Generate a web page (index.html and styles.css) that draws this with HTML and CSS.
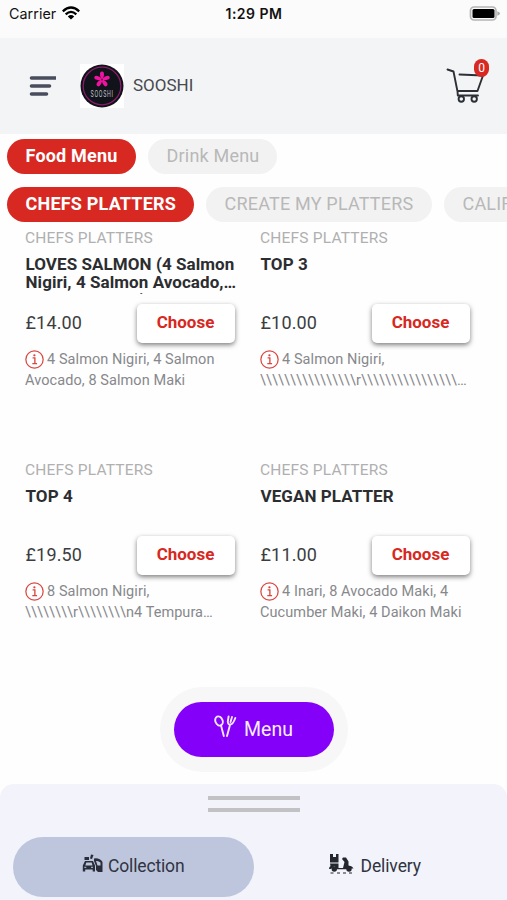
FILE: index.html
```html
<!DOCTYPE html>
<html lang="en">
<head>
<meta charset="utf-8">
<title>SOOSHI</title>
<link rel="stylesheet" href="styles.css">
</head>
<body>
<svg class="defs" width="0" height="0" aria-hidden="true">
  <symbol id="info" viewBox="0 0 20 20">
    <circle cx="10" cy="10" r="9.100" fill="none" stroke="#d9453f" stroke-width="1.300"/>
    <path d="M8 8.3h2.4v5.8M7.7 14.3h5" fill="none" stroke="#d9453f" stroke-width="1.400"/>
    <circle cx="9.9" cy="5.6" r="1.200" fill="#d9453f"/>
  </symbol>
</svg>
<div class="status">
  <div class="carrier"><span>Carrier</span>
    <svg width="18" height="14" viewBox="0 0 18 14"><g fill="none" stroke="#000" stroke-width="2.300"><path d="M.8 5.3Q9-2.2 17.200 5.300"/><path d="M3.700 8.300Q9 3.400 14.300 8.300"/></g><path d="M5.800 10.400Q9 7.800 12.200 10.400L9 13.600Z"/></svg>
  </div>
  <div class="time">1:29 PM</div>
  <svg class="battery" width="32" height="16" viewBox="0 0 32 16"><rect x="1.500" y="1" width="25.500" height="13" rx="3.500" fill="#fafafa" stroke="#b5b5b5" stroke-width="1.700"/><rect x="3.500" y="3" width="22" height="9" rx="1.500"/><path d="M28.300 5.300Q31 6 31 7.500T28.300 9.700Z" fill="#aaa"/></svg>
</div>
<header class="header">
  <svg class="burger" width="28" height="20" viewBox="0 0 28 20"><path d="M3.500 2h24M3.500 10h18M3.500 18h15" stroke="#484c5c" stroke-width="3.600" stroke-linecap="round"/></svg>
  <div class="logo">
    <svg width="44" height="44" viewBox="0 0 44 44">
      <circle cx="22" cy="22" r="21.500" fill="#11131a"/>
      <circle cx="22" cy="22" r="18.800" fill="none" stroke="#8c1c6a" stroke-width="1.200"/>
      <g fill="#f012a0" transform="translate(22 15.500)">
        <path id="petal" d="M-.8 0L-1.900-4Q-2.500-8 0-8Q2.500-8 1.900-4L.8 0Z"/>
        <use href="#petal" transform="rotate(72)"/><use href="#petal" transform="rotate(144)"/><use href="#petal" transform="rotate(216)"/><use href="#petal" transform="rotate(288)"/>
      </g>
      <circle cx="22" cy="15.500" r="1" fill="#59133f"/>
      <text class="logo-text" transform="translate(10.500 33) scale(.56 1)">SOOSHI</text>
    </svg>
  </div>
  <div class="brand">SOOSHI</div>
  <div class="cart">
    <svg width="40" height="38" viewBox="0 0 40 38" fill="none" stroke="#2c3036" stroke-width="1.900" stroke-linecap="round" stroke-linejoin="round"><path d="M1.500 2.500L7.500 4.500L11.500 24.500M13.500 7.500L37 8.500L31.500 24H11.500L11.800 28.500H32"/><circle cx="15.300" cy="32" r="2.700"/><circle cx="28.200" cy="32" r="2.700"/></svg>
    <span class="badge">0</span>
  </div>
</header>
<nav class="pills">
  <div class="pill on food">Food Menu</div>
  <div class="pill drink">Drink Menu</div>
</nav>
<nav class="pills second">
  <div class="pill on chefs">CHEFS PLATTERS</div>
  <div class="pill create">CREATE MY PLATTERS</div>
  <div class="pill cali">CALIFORNIA</div>
</nav>
<main class="grid">
  <article class="item">
    <div class="cat">CHEFS PLATTERS</div>
    <h2 class="title">LOVES SALMON (4 Salmon Nigiri, 4 Salmon Avocado,…<br>8 Salmon Maki)</h2>
    <div class="buy"><span class="price">£14.00</span><div class="choose">Choose</div></div>
    <p class="desc"><svg class="info"><use href="#info"/></svg>4 Salmon Nigiri, 4 Salmon Avocado, 8 Salmon Maki</p>
  </article>
  <article class="item">
    <div class="cat">CHEFS PLATTERS</div>
    <h2 class="title">TOP 3</h2>
    <div class="buy"><span class="price">£10.00</span><div class="choose">Choose</div></div>
    <p class="desc"><svg class="info"><use href="#info"/></svg>4 Salmon Nigiri,<br><span class="slashes">\\\\\\\\\\\\\\\\r\\\\\\\\\\\\\\\\…</span></p>
  </article>
  <article class="item">
    <div class="cat">CHEFS PLATTERS</div>
    <h2 class="title">TOP 4</h2>
    <div class="buy"><span class="price">£19.50</span><div class="choose">Choose</div></div>
    <p class="desc"><svg class="info"><use href="#info"/></svg>8 Salmon Nigiri,<br><span class="slashes">\\\\\\\\r\\\\\\\\n4 Tempura…</span></p>
  </article>
  <article class="item">
    <div class="cat">CHEFS PLATTERS</div>
    <h2 class="title">VEGAN PLATTER</h2>
    <div class="buy"><span class="price">£11.00</span><div class="choose">Choose</div></div>
    <p class="desc"><svg class="info"><use href="#info"/></svg>4 Inari, 8 Avocado Maki, 4<br>Cucumber Maki, 4 Daikon Maki</p>
  </article>
</main>
<div class="menu-wrap">
  <div class="menu">
    <svg width="23" height="23" viewBox="0 0 23 23" fill="none" stroke="#f3e6ff" stroke-width="1.900" stroke-linecap="round" stroke-linejoin="round"><ellipse cx="5" cy="6" rx="3.600" ry="4.700" transform="rotate(-24 5 6)"/><path d="M7 10.500L9.800 21M14.600 1.500L13.800 6.500Q14 10 16.200 9.500Q19 9.500 21.300 3M18 2L16.500 7M16 10L13 21"/></svg>
    <span>Menu</span>
  </div>
</div>
<footer class="sheet">
  <div class="handle"></div>
  <div class="modes">
    <div class="mode active">
      <svg width="21" height="20" viewBox="0 0 21 20" fill="#292d3a"><path d="M2.500 3h4.500v3h-4.500zM9 .5l2.500 .5-1.500 4-2-.5zM3 7h8l2 4.500v6h-2.300v-2H3.200v2H.8v-6zM4.300 8.500l-1 3h7.200L9.700 8.500z" fill-rule="evenodd"/><path d="M12 4.500q5.500-1 8.500 3.500V18h-4.500l-2-2v-4l-2-5zM14 7l1.500 4.500h3V8.500Q16.500 6.500 14 7z" fill-rule="evenodd"/><path d="M2.300 13.300h2M9 13.300h2" stroke="#bec6dd" fill="none"/></svg>
      <span class="collect-label">Collection</span>
    </div>
    <div class="mode">
      <svg width="25" height="20" viewBox="0 0 25 20" fill="#24272e"><path d="M1 0h3v3h3V0h2.500v8.500H1zM1 9.500h8.500v4.500h4.500l1.500-6-2.500-3 1-1.500H17l2.500 4v4q4 .5 5 3h-3.500l-2 .8h-11L5.500 12 2 15H0q0-2 1.500-3z"/><circle cx="5.300" cy="15" r="2.700"/><circle cx="20" cy="15" r="2.700"/><path d="M1.500 19h3M8 19h3M14 19h3M20 19h3" stroke="#24272e"/></svg>
      <span class="delivery-label">Delivery</span>
    </div>
  </div>
</footer>
</body>
</html>
```
FILE: styles.css
```css
* { box-sizing: border-box; }
body {
  margin: 0;
  width: 507px;
  height: 900px;
  overflow: hidden;
  display: flex;
  flex-direction: column;
  background: #fefefe;
  font-family: Roboto, "Liberation Sans", sans-serif;
  color: #2c2d30;
}
svg { display: block; flex: none; }
.defs { position: absolute; }
.status {
  flex: none;
  height: 38px;
  padding: 0 6px 11px 9px;
  display: grid;
  grid-template-columns: 1fr auto 1fr;
  align-items: center;
  background: #fbfbfb;
  font-family: Inter, sans-serif;
  font-size: 14px;
  color: #111;
}
.carrier { display: flex; align-items: center; gap: 6px; font-size: 14.300px; letter-spacing: .05px; }
.carrier svg { margin-bottom: 1px; }
.time { font-weight: 600; font-size: 14px; letter-spacing: .5px; margin-right: 2px; }
.battery { justify-self: end; }
.header {
  flex: none;
  height: 96px;
  padding: 0 17px 0 28px;
  display: flex;
  align-items: center;
  background: #f2f4f6;
}
.logo { margin-left: 24px; background: #fff; }
.logo-text { font: 9.500px Roboto, sans-serif; letter-spacing: 1.300px; fill: #c3c4cc; }
.brand { margin: 0 0 2px 9px; font-size: 17px; color: #48494c; }
.cart { position: relative; margin-left: auto; margin-right: 4px; }
.badge {
  position: absolute;
  top: -8px;
  right: -3px;
  width: 15px;
  height: 18px;
  border-radius: 8px;
  background: #d82822;
  color: #fff;
  font-size: 12px;
  line-height: 18px;
  text-align: center;
}
.pills { flex: none; display: flex; gap: 12px; padding: 5px 0 0 7px; overflow: hidden; }
.pills.second { padding-top: 13px; }
.pill {
  flex: none;
  height: 35px;
  padding-left: 18.500px;
  border-radius: 18px;
  background: #f2f2f2;
  color: #b8b8b8;
  font-size: 18px;
  letter-spacing: .2px;
  line-height: 34px;
  white-space: nowrap;
}
.pill.on { background: #d82822; color: #fff; font-weight: 700; }
.food { width: 129px; }
.drink { width: 129px; }
.chefs { width: 187px; }
.create { width: 226px; }
.cali { width: 140px; }
.grid {
  flex: none;
  height: 464px;
  display: grid;
  grid-template-columns: 211px 211px;
  grid-template-rows: 232px 232px;
  column-gap: 24px;
  padding-left: 25px;
}
.item { padding-top: 6px; }
.cat { height: 20px; line-height: 20px; font-size: 15.500px; letter-spacing: .2px; color: #b0b0b0; }
.title {
  margin: 7px -4px 0 0;
  padding-left: .5px;
  height: 39px;
  overflow: hidden;
  font-size: 17px;
  letter-spacing: .07px;
  line-height: 18px;
  font-weight: 700;
}
.buy { margin-top: 9px; height: 40px; display: flex; align-items: center; justify-content: space-between; }
.price { font-size: 18px; letter-spacing: .15px; color: #3c3d40; padding-bottom: 2px; padding-left: .5px; }
.choose {
  width: 98px;
  height: 39px;
  margin-right: 1px;
  padding-right: 1px;
  border-radius: 5px;
  background: #fff;
  box-shadow: 0 2px 5px rgba(0, 0, 0, .5);
  color: #d82822;
  font-size: 17px;
  font-weight: 700;
  line-height: 37px;
  text-align: center;
}
.desc { margin: 6px -4px 0 0; font-size: 14.500px; letter-spacing: .08px; line-height: 21px; color: #87888c; }
.info { display: inline-block; width: 19px; height: 19px; margin: 0 3px -1px 0; vertical-align: -4px; }
.slashes { white-space: nowrap; letter-spacing: .05px; }
.menu-wrap {
  flex: none;
  width: 188px;
  height: 85px;
  margin: 1px 0 0 160px;
  padding: 15px 14px;
  border-radius: 43px;
  background: #f7f7f7;
}
.menu {
  height: 55px;
  border-radius: 28px;
  background: #8400f9;
  display: flex;
  align-items: center;
  justify-content: center;
  gap: 7px;
  color: #f8efff;
  font-size: 19.500px;
  padding-right: 1px;
}
.menu span { margin-bottom: 0; }
.menu svg { margin-bottom: 6px; }
.sheet {
  flex: none;
  height: 116px;
  margin-top: 12px;
  border-radius: 14px 14px 0 0;
  background: #f2f3fb;
  padding: 12px 13px 0;
}
.handle {
  width: 92px;
  height: 16px;
  margin: 0 auto 0 195px;
  border: solid #c2c2c5;
  border-width: 4px 0;
}
.modes { margin-top: 25px; display: flex; }
.mode { width: 241px; height: 60px; display: flex; align-items: center; justify-content: center; gap: 5px; font-size: 17.500px; color: #303442; border-radius: 30px; }
.mode span { margin-bottom: 2px; }
.mode svg { margin-bottom: 6px; }
.mode.active { background: #bec6dd; }
.collect-label { letter-spacing: -.15px; }
.delivery-label { padding-left: 2px; margin-right: -2px; letter-spacing: -.1px; }
```
